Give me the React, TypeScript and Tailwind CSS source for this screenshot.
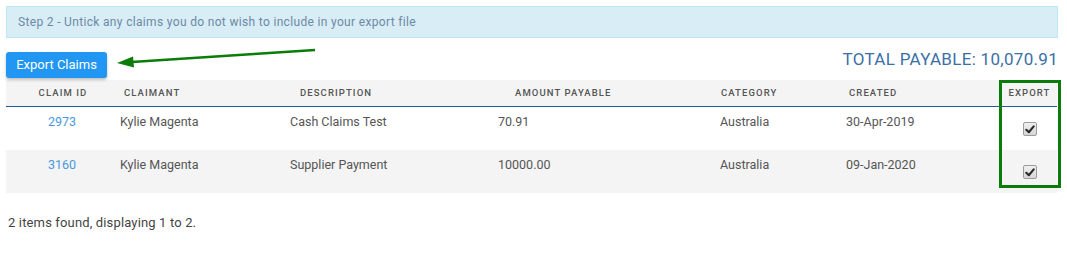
import React from 'react';

const rows = [
  { id: '2973', claimant: 'Kylie Magenta', description: 'Cash Claims Test', amount: '70.91', category: 'Australia', created: '30-Apr-2019' },
  { id: '3160', claimant: 'Kylie Magenta', description: 'Supplier Payment', amount: '10000.00', category: 'Australia', created: '09-Jan-2020' },
];

const cols = 'grid grid-cols-[112px_170px_208px_219px_128px_157px_1fr]';

function CheckBox() {
  return (
    <span className="inline-flex w-[14px] h-[14px] items-center justify-center rounded-[2px] border border-[#9c9c9c] bg-gradient-to-b from-[#f0f0f0] to-[#d6d6d6]">
      <svg width="10" height="9" viewBox="0 0 10 9">
        <path d="M1.3 4.8 L3.8 7.2 L8.7 1.4" fill="none" stroke="#2a2a2a" strokeWidth="2.1" strokeLinecap="round" strokeLinejoin="round" />
      </svg>
    </span>
  );
}

export default function App() {
  return (
    <div className="relative w-[1067px] h-[253px] bg-white font-['Roboto',sans-serif] text-[#555]">
      {/* info banner */}
      <div className="pt-[6px] pl-[6px] pr-[9px]">
        <div className="h-[32px] flex items-center pl-[11px] bg-[#d9edf7] border border-[#bce8f1] text-[12px] tracking-[0.33px] text-[#6c8aa4]">
          Step 2 - Untick any claims you do not wish to include in your export file
        </div>
      </div>

      {/* button + total */}
      <div className="flex items-start justify-between pl-[6px] pr-[9px] mt-[14px]">
        <button className="h-[26px] w-[101px] rounded-[3px] bg-[#2196f3] text-white text-[13px] shadow-[0_2px_3px_rgba(0,0,0,0.25)]">
          Export Claims
        </button>
        <div className="text-[17px] leading-[20px] text-[#3a6fa6] tracking-[0.3px] -mt-[3px]">TOTAL PAYABLE: 10,070.91</div>
      </div>

      {/* table */}
      <div className="mt-[2px] ml-[6px] mr-[10px]">
        <div className={`${cols} h-[27px] items-center bg-[#f4f4f4] border-b border-[#1f5f9e] text-[9.5px] font-medium tracking-[1.1px] text-[#555]`}>
          <div className="text-center pl-[2px]">CLAIM ID</div>
          <div className="pl-[6px]">CLAIMANT</div>
          <div className="pl-[12px]">DESCRIPTION</div>
          <div className="pl-[19px]">AMOUNT PAYABLE</div>
          <div className="pl-[6px]">CATEGORY</div>
          <div className="pl-[6px]">CREATED</div>
          <div className="text-center pl-[2px]">EXPORT</div>
        </div>
        {rows.map((r, i) => (
          <div key={r.id} className={`${cols} h-[43px] text-[12.5px] ${i % 2 ? 'bg-[#f4f4f4]' : 'bg-white'}`}>
            <div className="text-center pt-[6px] text-[#4a98e0]">{r.id}</div>
            <div className="pl-[2px] pt-[6px]">{r.claimant}</div>
            <div className="pl-[2px] pt-[6px]">{r.description}</div>
            <div className="pl-[2px] pt-[6px]">{r.amount}</div>
            <div className="pl-[5px] pt-[6px]">{r.category}</div>
            <div className="pl-[3px] pt-[6px]">{r.created}</div>
            <div className="flex justify-center pt-[15px] pl-[2px]"><CheckBox /></div>
          </div>
        ))}
      </div>

      <div className="mt-[20px] pl-[8px] text-[13px] tracking-[0.15px] text-[#444]">2 items found, displaying 1 to 2.</div>

      {/* annotation: green box round export column */}
      <div className="absolute left-[999px] top-[80px] w-[62px] h-[108px] border-[3px] border-[#0a7c0a]" />

      {/* annotation arrow */}
      <svg className="absolute left-0 top-0" width="1067" height="253">
        <line x1="315" y1="50" x2="128" y2="62.3" stroke="#0a7c0a" strokeWidth="2.5" />
        <polygon points="117,63 133,56.5 134,67.5" fill="#0a7c0a" />
      </svg>
    </div>
  );
}
